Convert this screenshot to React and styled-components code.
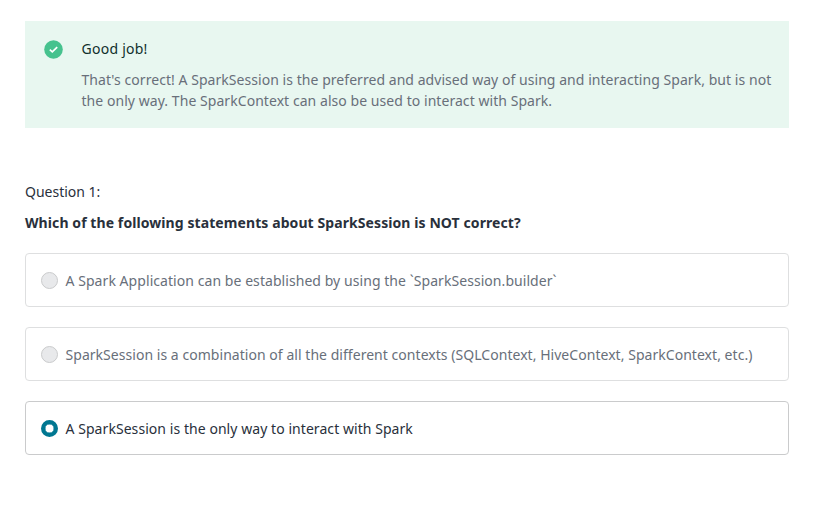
import React from "react";
import styled, { createGlobalStyle } from "styled-components";

const GlobalStyle = createGlobalStyle`
  * { box-sizing: border-box; }
  body {
    margin: 0;
    background: #fff;
    font-family: "Noto Sans", "Open Sans", sans-serif;
    font-size: 14px;
    color: #29303b;
  }
`;

const Page = styled.main`
  width: 828px;
  height: 523px;
  padding: 21px 39px 0 25px;
`;

const Alert = styled.section`
  display: flex;
  gap: 18.5px;
  height: 107px;
  padding: 17px 0 0 19px;
  background: #e8f7f0;
`;

const CheckIcon = styled.svg`
  flex: none;
  width: 19px;
  height: 19px;
  margin-top: 2px;
`;

const Line = styled.span`
  display: block;
  white-space: nowrap;
  line-height: 21px;
  letter-spacing: ${(p) => p.$tracking || 0}px;
`;

const AlertTitle = styled.div`
  margin-bottom: 10px;
  color: #10302c;
`;

const AlertBody = styled.div`
  color: #686f7a;
`;

const QuestionLabel = styled.div`
  margin-top: 53px;
`;

const QuestionText = styled.h1`
  margin: 10px 0 20px;
  font-size: 14px;
  font-weight: 700;
`;

const Options = styled.div`
  display: grid;
  gap: 20px;
`;

const Option = styled.label`
  display: flex;
  align-items: center;
  gap: 7.5px;
  height: 54px;
  padding-left: 15px;
  border: 1px solid ${(p) => (p.$selected ? "#cacbcc" : "#dedfe0")};
  border-radius: 4px;
  color: ${(p) => (p.$selected ? "#29303b" : "#686f7a")};
`;

const Radio = styled.span`
  flex: none;
  width: 17px;
  height: 17px;
  margin-top: 1px;
  border-radius: 50%;
  border: ${(p) => (p.$selected ? "4px solid #007791" : "1px solid #cacbcc")};
  box-shadow: ${(p) => (p.$selected ? "inset 0 0 0 0.5px #007791" : "none")};
  background: ${(p) => (p.$selected ? "#fff" : "#e8e9eb")};
`;

const OPTIONS = [
  { text: "A Spark Application can be established by using the `SparkSession.builder`", tracking: 0.06 },
  { text: "SparkSession is a combination of all the different contexts (SQLContext, HiveContext, SparkContext, etc.)", tracking: 0.04 },
  { text: "A SparkSession is the only way to interact with Spark", tracking: 0.06, selected: true },
];

export default function App() {
  return (
    <>
      <GlobalStyle />
      <Page>
        <Alert>
          <CheckIcon viewBox="0 0 19 19">
            <circle cx="9.5" cy="9.5" r="9.3" fill="#46c28e" />
            <path d="M5.8 9.6l2.5 2.3L13.2 7.1" fill="none" stroke="#fff" strokeWidth="1.7" />
          </CheckIcon>
          <div>
            <AlertTitle><Line $tracking={0.25}>Good job!</Line></AlertTitle>
            <AlertBody>
              <Line $tracking={0.048}>That's correct! A SparkSession is the preferred and advised way of using and interacting Spark, but is not</Line>
              <Line $tracking={0.055}>the only way. The SparkContext can also be used to interact with Spark.</Line>
            </AlertBody>
          </div>
        </Alert>
        <QuestionLabel><Line>Question 1:</Line></QuestionLabel>
        <QuestionText><Line $tracking={0.085}>Which of the following statements about SparkSession is NOT correct?</Line></QuestionText>
        <Options>
          {OPTIONS.map((o) => (
            <Option key={o.text} $selected={o.selected}>
              <Radio $selected={o.selected} />
              <Line $tracking={o.tracking}>{o.text}</Line>
            </Option>
          ))}
        </Options>
      </Page>
    </>
  );
}
